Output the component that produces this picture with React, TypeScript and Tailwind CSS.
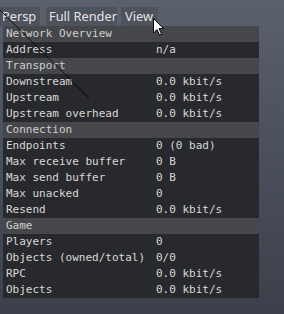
import React from 'react';

type Row = { label: string; value?: string; header?: boolean };

const rows: Row[] = [
  { label: 'Network Overview', header: true },
  { label: 'Address', value: 'n/a' },
  { label: 'Transport', header: true },
  { label: 'Downstream', value: '0.0 kbit/s' },
  { label: 'Upstream', value: '0.0 kbit/s' },
  { label: 'Upstream overhead', value: '0.0 kbit/s' },
  { label: 'Connection', header: true },
  { label: 'Endpoints', value: '0 (0 bad)' },
  { label: 'Max receive buffer', value: '0 B' },
  { label: 'Max send buffer', value: '0 B' },
  { label: 'Max unacked', value: '0' },
  { label: 'Resend', value: '0.0 kbit/s' },
  { label: 'Game', header: true },
  { label: 'Players', value: '0' },
  { label: 'Objects (owned/total)', value: '0/0' },
  { label: 'RPC', value: '0.0 kbit/s' },
  { label: 'Objects', value: '0.0 kbit/s' },
];

export default function App() {
  return (
    <div className="relative w-[284px] h-[314px] overflow-hidden bg-gradient-to-b from-[#5a606c] to-[#3b404b]">
      {/* tab strip */}
      <div className="flex pt-[7px] font-['Noto_Sans',sans-serif] text-[12.8px] text-[#e4e4e4]">
        <div className="w-[40px] h-[19px] bg-[#4d525b] pl-[2px] leading-[19px]">Persp</div>
        <div className="ml-[6px] w-[71px] h-[19px] bg-[#4d525b] pl-[3px] leading-[19px]">Full Render</div>
        <div className="ml-[4px] w-[37px] h-[19px] bg-[#4d525b] pl-[4px] leading-[19px]">View</div>
      </div>

      {/* stats panel */}
      <div className="ml-[3px] w-[256px] font-['DejaVu_Sans_Mono',monospace] text-[11px]">
        {rows.map((r, i) => (
          <div
            key={i}
            className={`flex h-[16px] items-center pl-[3px] ${
              r.header ? 'bg-[#46474a] text-[#d0d0d0]' : 'bg-[#28292c] text-[#d8d8d8]'
            }`}
          >
            <span className="w-[150px] whitespace-pre">{r.label}</span>
            {r.value && <span className="whitespace-pre">{r.value}</span>}
          </div>
        ))}
      </div>

      {/* viewport line + mouse cursor */}
      <svg className="absolute left-0 top-0 pointer-events-none" width="284" height="314">
        <line x1="0" y1="10" x2="89" y2="98" stroke="#000" strokeOpacity="0.8" strokeWidth="1" />
        <path
          d="M153.5 18.5 L153.5 33 L157 29.5 L159.5 35 L161.5 34 L159 28.5 L163.5 28.5 Z"
          fill="#fff"
          stroke="#000"
          strokeWidth="1"
          strokeLinejoin="round"
        />
      </svg>
    </div>
  );
}
